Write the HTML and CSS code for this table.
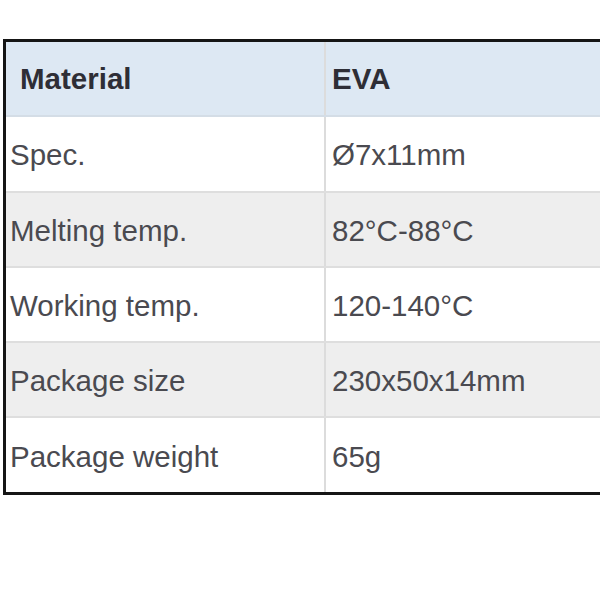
FILE: index.html
```html
<!DOCTYPE html>
<html>
<head>
<meta charset="utf-8">
<link rel="stylesheet" href="styles.css">
</head>
<body>
<div class="page">
  <table class="spec">
    <tr class="head">
      <th class="label">Material</th>
      <th class="value">EVA</th>
    </tr>
    <tr class="odd">
      <td class="label">Spec.</td>
      <td class="value">Ø7x11mm</td>
    </tr>
    <tr class="even">
      <td class="label">Melting temp.</td>
      <td class="value">82°C-88°C</td>
    </tr>
    <tr class="odd">
      <td class="label">Working temp.</td>
      <td class="value">120-140°C</td>
    </tr>
    <tr class="even">
      <td class="label">Package size</td>
      <td class="value">230x50x14mm</td>
    </tr>
    <tr class="odd">
      <td class="label">Package weight</td>
      <td class="value">65g</td>
    </tr>
  </table>
</div>
</body>
</html>
```
FILE: styles.css
```css
html, body {
  margin: 0;
  padding: 0;
  background: #ffffff;
}
body {
  width: 600px;
  height: 600px;
  overflow: hidden;
  font-family: "Liberation Sans", Arial, sans-serif;
}
.page {
  padding-top: 39px;
  padding-left: 3px;
  width: 597px;
  overflow: hidden;
}
.spec {
  border-collapse: collapse;
  width: 640px;
  border-top: 3px solid #151515;
  border-left: 3px solid #151515;
  border-bottom: 3px solid #151515;
  table-layout: fixed;
}
.spec th,
.spec td {
  padding: 0;
  text-align: left;
  vertical-align: middle;
  font-size: 29.5px;
  line-height: 34px;
  border-bottom: 2px solid #dedede;
}
.spec th {
  height: 73.3px;
}
.spec td {
  height: 70.3px;
  padding-top: 3px;
}
.spec tr:last-child td {
  border-bottom: none;
}
.spec .label {
  padding-left: 4px;
  border-right: 2px solid #dcdcdc;
}
.spec .value {
  padding-left: 6px;
}
.head th {
  background: #dde8f3;
  color: #2e2e36;
  font-weight: bold;
  border-bottom: 2px solid #d4dde6;
}
.head th.label {
  width: 304px;
  padding-left: 14px;
}
.odd td {
  background: #ffffff;
  color: #4a4a50;
}
.even td {
  background: #eeeeee;
  color: #4a4a50;
}
```
